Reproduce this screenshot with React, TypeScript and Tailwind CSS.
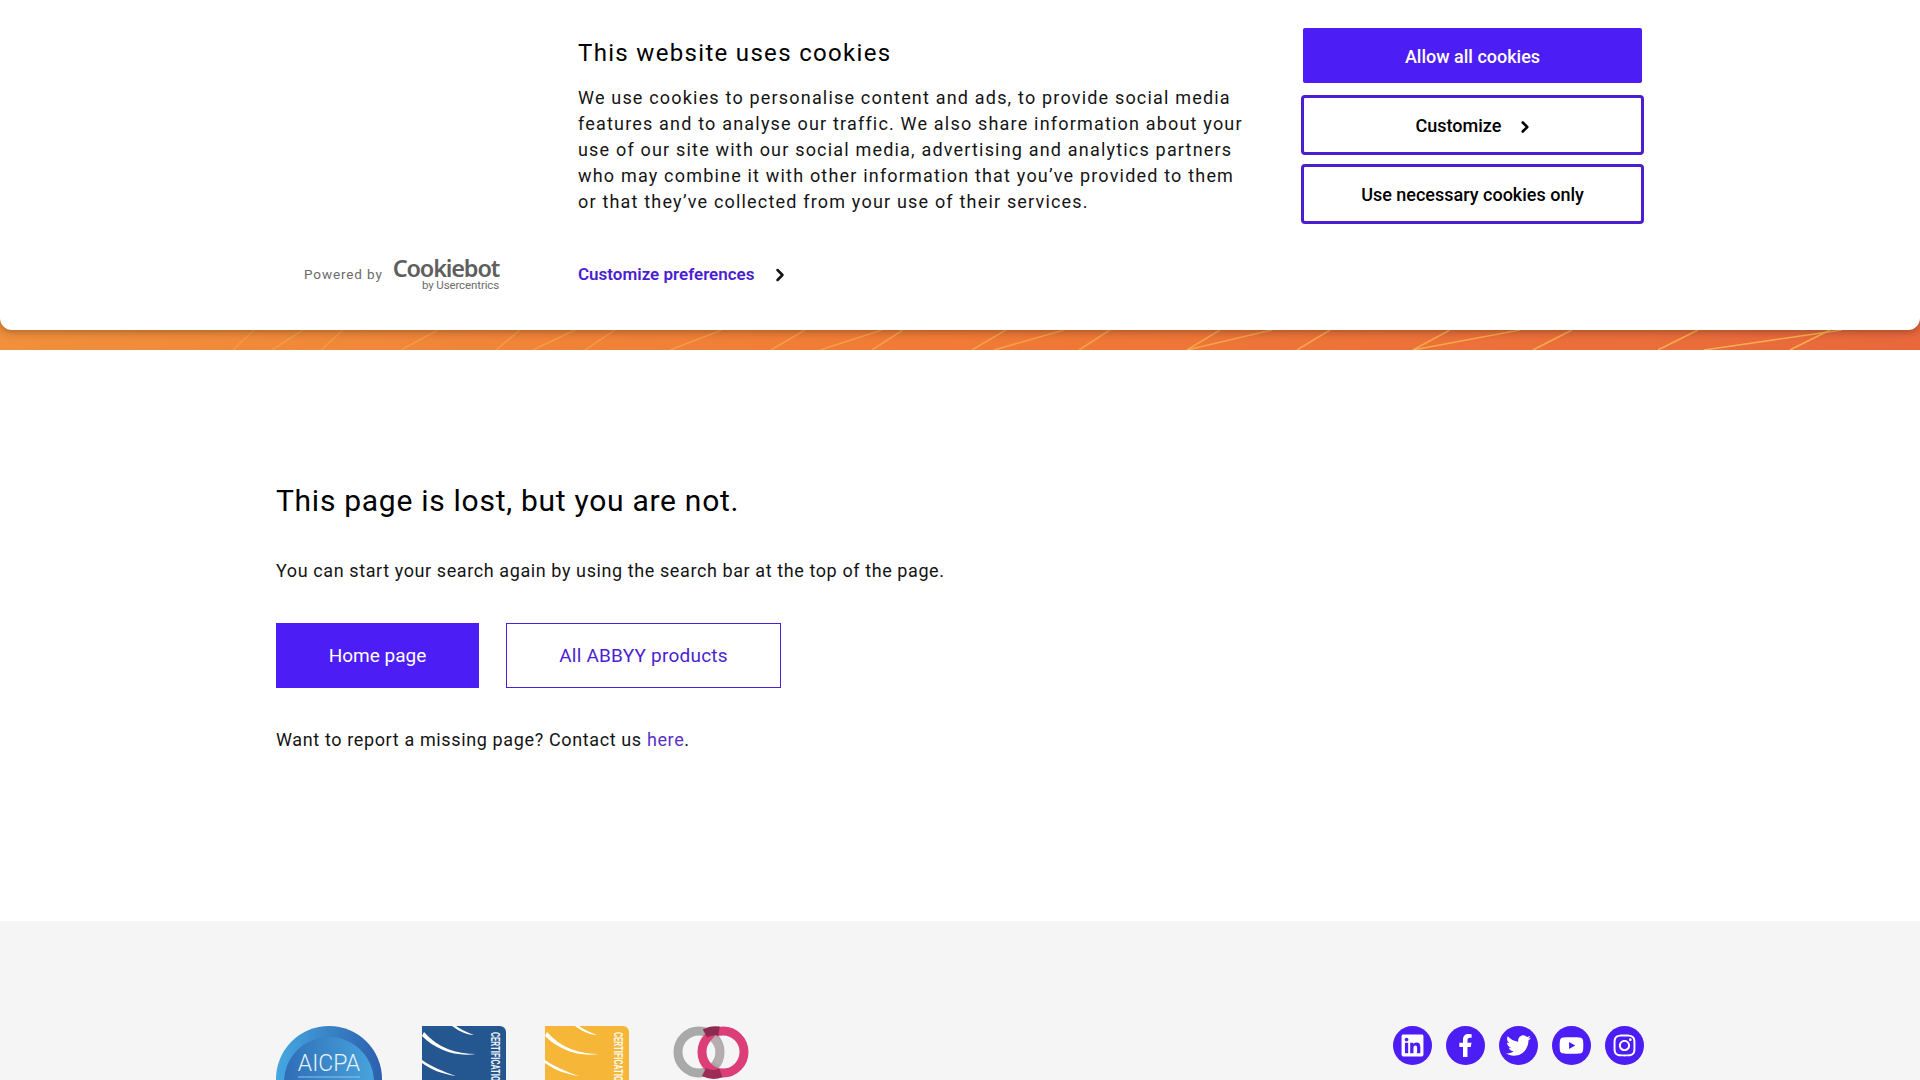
import { ChevronRight } from "lucide-react";
import { FaFacebookF, FaInstagram, FaLinkedin, FaTwitter, FaYoutube } from "react-icons/fa";

const font = "font-['Roboto',sans-serif]";

// diagonal streaks in the orange band: [bottom x, top x]
const streaks = [
  [233, 254], [272, 303], [321, 343], [401, 438], [496, 520], [533, 575], [585, 615], [670, 722], [771, 805],
  [820, 882], [872, 903], [972, 1006], [994, 1064], [1079, 1110], [1187, 1220], [1187, 1272], [1297, 1330],
  [1413, 1450], [1413, 1520], [1533, 1572], [1658, 1698], [1704, 1842], [1790, 1830],
];

function HeroBand() {
  return (
    <div className="h-[350px] bg-gradient-to-r from-[#f08f3c] via-[#f07a36] to-[#e8683c]">
      <svg width="1920" height="350" viewBox="0 0 1920 350" className="block">
        {streaks.map(([bottom, top], i) => (
          <line
            key={i}
            x1={bottom}
            y1={350}
            x2={top}
            y2={330}
            stroke="#f8b650"
            strokeOpacity={0.3 + (bottom / 1920) * 0.7}
            strokeWidth={1.5}
          />
        ))}
      </svg>
    </div>
  );
}

function CookieBanner() {
  return (
    <div className="absolute top-0 left-0 w-full h-[330px] bg-white rounded-b-[12px] shadow-[0_1px_10px_rgba(0,0,0,0.35)] flex pl-[276px]">
      {/* Cookiebot logo */}
      <div className="w-[302px] pl-[28px] pb-[39px] flex items-end">
        <div className="flex items-center gap-[10px] text-[#6b6b6b]">
          <span className="text-[13.5px] tracking-[0.065em] leading-none mt-[3px]">Powered by</span>
          <div className="flex flex-col items-end">
            <span className="text-[23.5px] font-semibold leading-[24px] tracking-[-0.05em] text-[#5f5f5f] font-['Noto_Sans',sans-serif]">Cookiebot</span>
            <span className="text-[11.5px] leading-[11px] tracking-[-0.01em]">by Usercentrics</span>
          </div>
        </div>
      </div>

      <div className="w-[723px] pt-[39px]">
        <h2 className="text-[24px] leading-[28px] tracking-[0.055em] text-black">This website uses cookies</h2>
        <p className="mt-[18px] w-[672px] text-[18px] leading-[26px] tracking-[0.066em] text-[#141414]">
          We use cookies to personalise content and ads, to provide social media features and to analyse our traffic. We also share information about your use of our site with our social media, advertising and analytics partners who may combine it with other information that you’ve provided to them or that they’ve collected from your use of their services.
        </p>
        <div className="mt-[49px] flex items-center h-[22px] text-[17px] font-semibold text-[#4a1fd1]">
          Customize preferences
          <ChevronRight size={20} strokeWidth={3} className="ml-[15px] text-[#141414]" />
        </div>
      </div>

      <div className="w-[343px] pt-[28px] flex flex-col text-[18px] font-medium">
        <button className="mx-[2px] h-[55px] pt-[2px] bg-[#4d1df5] rounded-[2px] text-white">Allow all cookies</button>
        <button className="mt-[12px] h-[60px] pt-[1px] pl-[5px] border-[3px] border-[#4a1fd1] rounded-[4px] text-black flex items-center justify-center">
          Customize
          <ChevronRight size={18} strokeWidth={3.5} className="ml-[15px] mt-[2px]" />
        </button>
        <button className="mt-[9px] h-[60px] pt-[1px] border-[3px] border-[#4a1fd1] rounded-[4px] text-black">Use necessary cookies only</button>
      </div>
    </div>
  );
}

function AicpaBadge() {
  return (
    <svg width="106" height="54" viewBox="0 0 106 54" className="block">
      <defs>
        <linearGradient id="aicpaOuter" x1="0" y1="0" x2="1" y2="0">
          <stop offset="0" stopColor="#45a8e0" />
          <stop offset="1" stopColor="#2d5fae" />
        </linearGradient>
        <linearGradient id="aicpaInner" x1="0" y1="0" x2="1" y2="0">
          <stop offset="0" stopColor="#2f6db8" />
          <stop offset="1" stopColor="#48a4dc" />
        </linearGradient>
      </defs>
      <circle cx="53" cy="53" r="53" fill="url(#aicpaOuter)" />
      <circle cx="53" cy="56" r="45" fill="url(#aicpaInner)" />
      <text x="53" y="45" textAnchor="middle" fontSize="23" fill="#e6f2fb" fontFamily="Roboto, sans-serif" fontWeight="300">AICPA</text>
      <line x1="22" y1="51" x2="84" y2="51" stroke="#a8d2ee" strokeWidth="0.8" />
    </svg>
  );
}

function CertBadge({ color, id }: { color: string; id: string }) {
  return (
    <svg width="84" height="54" viewBox="0 0 84 54" className="block">
      <clipPath id={id}>
        <path d="M0 0H78a6 6 0 0 1 6 6V54H0Z" />
      </clipPath>
      <g clipPath={`url(#${id})`}>
        <rect width="84" height="54" fill={color} />
        <path d="M0 10C14 24 34 31 54 28C34 28 16 22 2 6Z" fill="#fff" />
        <path d="M30 0C38 6 46 9 52 9C44 6 38 3 34 0Z" fill="#fff" />
        <path d="M0 37C10 44 20 48 34 50C20 45 10 41 0 34Z" fill="#fff" />
      </g>
      <text transform="translate(69 6) rotate(90) scale(0.85 1.5)" fontSize="9" fontWeight="700" fill="#fff" opacity="0.92" fontFamily="Roboto, sans-serif">CERTIFICATION</text>
    </svg>
  );
}

function RingsBadge() {
  return (
    <svg width="76" height="54" viewBox="0 0 76 54" className="block">
      <circle cx="26" cy="26" r="21" fill="none" stroke="#a9a9a9" strokeWidth="9" />
      <circle cx="50" cy="26" r="21" fill="none" stroke="#dc3f78" strokeWidth="9" />
      <path d="M32 7.5A21 21 0 0 1 46 5" fill="none" stroke="#8c2a50" strokeWidth="9" />
      <path d="M31 46A21 21 0 0 0 48 47" fill="none" stroke="#9c2b55" strokeWidth="9" />
      <path d="M40 12A21 21 0 0 1 44 38" fill="none" stroke="#b5adb0" strokeWidth="8" />
    </svg>
  );
}

const socials = [FaLinkedin, FaFacebookF, FaTwitter, FaYoutube, FaInstagram];

function Footer() {
  return (
    <div className="flex-1 min-h-0 overflow-hidden bg-[#f5f5f5] px-[276px] pt-[105px] flex justify-between items-start">
      <div className="flex">
        <AicpaBadge />
        <div className="ml-[40px]"><CertBadge color="#24568f" id="certBlue" /></div>
        <div className="ml-[39px]"><CertBadge color="#f6b637" id="certYellow" /></div>
        <div className="ml-[44px]"><RingsBadge /></div>
      </div>
      <div className="flex gap-[14px]">
        {socials.map((Icon, i) => (
          <div key={i} className="w-[39px] h-[39px] rounded-full bg-[#4d1df5] flex items-center justify-center text-white">
            <Icon size={i === 1 ? 23 : 25} />
          </div>
        ))}
      </div>
    </div>
  );
}

export default function App() {
  return (
    <div className={`relative h-screen overflow-hidden flex flex-col bg-white ${font}`}>
      <HeroBand />
      <CookieBanner />

      <div className="h-[571px] px-[276px] pt-[133px] text-[#141414]">
        <h1 className="text-[30px] leading-[36px] tracking-[0.024em] text-black">This page is lost, but you are not.</h1>
        <p className="mt-[39px] text-[18px] leading-[26px] tracking-[0.033em]">You can start your search again by using the search bar at the top of the page.</p>
        <div className="mt-[39px] flex gap-[27px] text-[19px]">
          <a className="w-[203px] h-[65px] pt-[1px] bg-[#4d1df5] text-white flex items-center justify-center">Home page</a>
          <a className="w-[275px] h-[65px] pt-[1px] border-[1.5px] border-[#4d1fd8] text-[#4a1fd1] tracking-[0.012em] flex items-center justify-center">All ABBYY products</a>
        </div>
        <p className="mt-[39px] text-[18px] leading-[26px] tracking-[0.035em]">
          Want to report a missing page? Contact us <a className="text-[#5a2fc8]">here</a>.
        </p>
      </div>

      <Footer />
    </div>
  );
}
